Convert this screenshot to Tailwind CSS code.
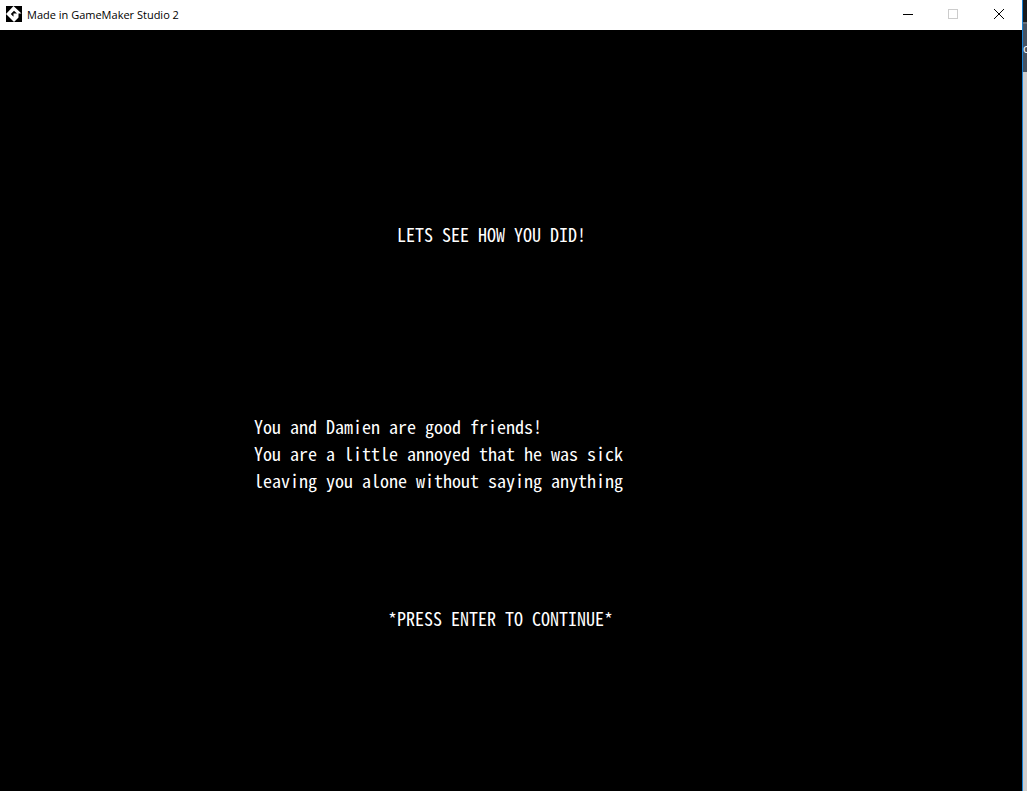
<!DOCTYPE html>
<html lang="en">
<head>
<meta charset="utf-8">
<title>Made in GameMaker Studio 2</title>
<script src="https://cdn.jsdelivr.net/npm/@tailwindcss/browser@4"></script>
</head>
<body class="flex min-h-screen overflow-hidden bg-black">
<div class="flex min-w-0 flex-1 flex-col">
  <header class="flex h-[30px] items-center bg-white pl-1.5 text-black">
    <svg class="mb-0.5 size-4 shrink-0" viewBox="0 0 16 16" aria-hidden="true">
      <path fill="#000" d="M0 0h16v16H0z"/>
      <path fill="#fff" d="M7.500 0 15.500 7.500H11L8 4.800 4.800 8 7.500 10.700V7.500h5v4L8 16 0 8z"/>
    </svg>
    <h1 class="ml-[5px] flex-1 truncate font-['Open_Sans',sans-serif] text-[11px] leading-4">Made in GameMaker Studio 2</h1>
    <button class="flex h-full w-[45px] items-center justify-center pb-px" aria-label="Minimize">
      <svg class="h-[11px] w-[11px]" viewBox="0 0 11 11" shape-rendering="crispEdges"><path d="M0 5h10v1H0z"/></svg>
    </button>
    <button class="flex h-full w-[45px] items-center justify-center pb-px" aria-label="Maximize" disabled>
      <svg class="h-[11px] w-[11px]" viewBox="0 0 11 11" shape-rendering="crispEdges"><path fill="none" stroke="#ccc" d="M.5 .5h9v9h-9z"/></svg>
    </button>
    <button class="flex h-full w-[46px] items-center justify-center pb-px" aria-label="Close">
      <svg class="h-[11px] w-[11px]" viewBox="0 0 11 11"><path fill="none" stroke="#000" d="M0 0l10 10M10 0L0 10"/></svg>
    </button>
  </header>
  <main class="flex-1 bg-black font-['Noto_Sans_Mono_CJK_SC','Noto_Sans_Mono_CJK_JP','Liberation_Mono',monospace] text-[18px] leading-[27px] font-normal text-white">
    <h2 class="pt-[191px] pl-[397px]">LETS SEE HOW YOU DID!</h2>
    <p class="pt-[165px] pl-[254px]">You and Damien are good friends!<br>You are a little annoyed that he was sick<br>leaving you alone without saying anything</p>
    <p class="pt-[111px] pl-[388px]">*PRESS ENTER TO CONTINUE*</p>
  </main>
</div>
<aside class="flex w-[5px] shrink-0 flex-col overflow-hidden border-l border-[#1883d7] bg-[#cdcdcd]">
  <div class="h-[22px] bg-[#171a1c]"></div>
  <div class="h-[50px] overflow-hidden border-t-2 border-[#6b7077] bg-[#465362] pt-[17px] font-['Open_Sans',sans-serif] text-[12px] leading-4 text-white">o</div>
</aside>
</body>
</html>
